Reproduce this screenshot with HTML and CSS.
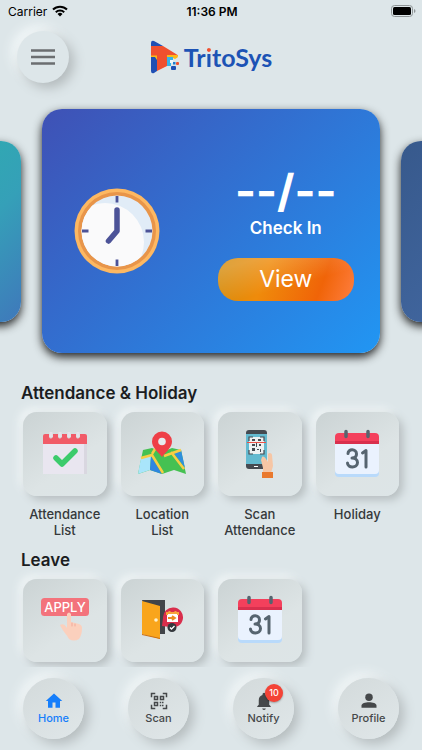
FILE: index.html
```html
<!DOCTYPE html>
<html lang="en">
<head>
    <meta charset="UTF-8">
    <meta name="viewport" content="width=device-width, initial-scale=1.0">
    <title>TritoSys</title>
    <link rel="stylesheet" href="styles.css">
</head>
<body>
    <!-- Shared icon used by both Holiday and Leave tiles -->
    <svg class="sprite" aria-hidden="true">
        <symbol id="calendar" viewBox="0 0 46 50">
            <path d="M1 38h44v6a4 4 0 0 1-4 4H5a4 4 0 0 1-4-4z" fill="#b9dafb"/>
            <path d="M1 12h44v29a4 4 0 0 1-4 4H5a4 4 0 0 1-4-4z" fill="#eaf2fe"/>
            <path d="M1 15V8a4 4 0 0 1 4-4h36a4 4 0 0 1 4 4v7z" fill="#f4405c"/>
            <path d="M1 12h44v3H1z" fill="#d9304e"/>
            <path d="M12 2.500v5M34 2.500v5" stroke="#56646f" stroke-width="3.500" stroke-linecap="round"/>
            <path d="M14 24.500c0-5 8.500-5 8.500.5 0 3-2 4-4.500 4 3 0 5.500 1.500 5.500 4.500 0 6-10 6-10 .5M28.500 24l3.500-2.500V38" fill="none" stroke="#56646f" stroke-width="3" stroke-linecap="round" stroke-linejoin="round"/>
        </symbol>
    </svg>

    <div class="status-bar">
        <div class="carrier">
            <span>Carrier</span>
            <svg width="16" height="12" viewBox="0 0 16 12" fill="none" stroke="#000" stroke-width="2">
                <path d="M1 4.500a10 10 0 0 1 14 0M3.800 7.300a6 6 0 0 1 8.400 0"/>
                <path d="M8 11.500L5.500 9a3.500 3.500 0 0 1 5 0z" fill="#000" stroke="none"/>
            </svg>
        </div>
        <time class="clock-time">11:36 PM</time>
        <svg class="battery" width="25" height="12" viewBox="0 0 25 12">
            <rect x=".5" y=".5" width="21" height="11" rx="3" fill="none" stroke="#8f9597"/>
            <rect x="2" y="2" width="18" height="8" rx="1.500"/>
            <path d="M23 4v4c2-.8 2-3.200 0-4z" fill="#8f9597"/>
        </svg>
    </div>

    <header class="header">
        <button class="menu-button" type="button" aria-label="Menu">
            <svg width="24" height="18" viewBox="0 0 24 18" stroke="#6b6e70" stroke-width="2.400">
                <path d="M0 2.500h24M0 9h24M0 15.500h24"/>
            </svg>
        </button>
        <div class="logo">
            <svg width="30" height="34" viewBox="0 0 30 34">
                <path d="M1 6V3Q1 0 4 1l9 5z" fill="#1f4fb4"/>
                <path d="M1 6h12l13 8q2 1 2 2H1z" fill="#f0502f"/>
                <path d="M1 16h6v15l-3 2q-3 1-3-2z" fill="#1f4fb4"/>
                <path d="M1 15.500h6V20l-2-3H1zM17 15h10.500q1 1 0 2.500L25 19l-2-1h-6z" fill="#fbb917"/>
                <path d="M7 16h10v10L7 31z" fill="#f0502f"/>
                <path d="M17 17h6v4h-2v5h-4z" fill="#35b4ea"/>
                <path d="M20 20h3v3h-3z" fill="#eef8fb"/>
                <rect x="21" y="26" width="5" height="4" rx="1" fill="#1f4fb4"/>
                <rect x="26" y="22" width="3" height="3" rx="1" fill="#f0502f"/>
                <path d="M23 22h2.500v2.500H23z" fill="#1f7fd0"/>
            </svg>
            <span class="logo-text">Tr<span class="logo-dot">i</span>toSys</span>
        </div>
    </header>

    <main>
        <section class="carousel">
            <div class="card card-side card-prev"></div>
            <div class="card card-main">
                <svg class="clock" viewBox="0 0 86 86">
                    <clipPath id="face"><circle cx="43" cy="43" r="35.500"/></clipPath>
                    <circle cx="43" cy="43" r="42.500" fill="#fdb862"/>
                    <circle cx="43" cy="43" r="39" fill="#e8954a"/>
                    <circle cx="43" cy="43" r="35.500" fill="#e1ecf7"/>
                    <circle cx="31" cy="54" r="39" fill="#fafafb" clip-path="url(#face)"/>
                    <path d="M43 8v6.500M43 71.500V78M8 43h6.500M71.500 43H78" stroke="#4c5398" stroke-width="2.800"/>
                    <path d="M43 22v21l-8.500 10" fill="none" stroke="#4c5398" stroke-width="5.500" stroke-linecap="round" stroke-linejoin="round"/>
                </svg>
                <div class="check-in">
                    <div class="check-time">--/--</div>
                    <div class="check-label">Check In</div>
                    <button class="view-button" type="button">View</button>
                </div>
            </div>
            <div class="card card-side card-next"></div>
        </section>

        <section class="group">
            <h2>Attendance &amp; Holiday</h2>
            <div class="tiles">
                <a class="tile" href="#">
                    <span class="tile-icon">
                        <svg width="46" height="46" viewBox="0 0 46 46">
                            <path d="M41 10h4v33h-6z" fill="#d9d7e0"/>
                            <path d="M1 10h41v33H1z" fill="#e9e6f0"/>
                            <path d="M1 13V5q0-2 2-2h4v3q1.500 3 4 0V3h5v3q1.500 3 4 0V3h5v3q1.500 3 4 0V3h5v3q1.500 3 4 0V3h5q2 0 2 2v8z" fill="#f15b68"/>
                            <path d="M7.500 1h3v5h-3zM16.500 1h3v5h-3zM25.500 1h3v5h-3zM34.500 1h3v5h-3z" fill="#e6e3ea"/>
                            <path d="M14 27l6 6 13-13" fill="none" stroke="#3ccb6c" stroke-width="5.500" stroke-linecap="round" stroke-linejoin="round"/>
                        </svg>
                    </span>
                    <span class="tile-label">Attendance List</span>
                </a>
                <a class="tile" href="#">
                    <span class="tile-icon">
                        <svg width="50" height="46" viewBox="0 0 50 46">
                            <path d="M6 19l9-2 10 4 10-4 9 2 5 24-12-4-12 4-12-4-12 4z" fill="#45c152"/>
                            <path d="M4 27l10-2-1 14-12 4z" fill="#a9e5fb"/>
                            <path d="M13 39l1-14 11 18z" fill="#2f86e0"/>
                            <path d="M36 21l8-2 4 18z" fill="#2f8fdd"/>
                            <path d="M4 27l11-3 11 18M15 23l3-5M27 25l17-6M34 21l13 17" fill="none" stroke="#f8cd45" stroke-width="2.500"/>
                            <path d="M25 26C20 20 15 16 15 10.500a10 10 0 0 1 20 0C35 16 30 20 25 26z" fill="#ee3f47"/>
                            <circle cx="25" cy="10.500" r="3.800" fill="#e6ebee"/>
                        </svg>
                    </span>
                    <span class="tile-label">Location List</span>
                </a>
                <a class="tile" href="#">
                    <span class="tile-icon">
                        <svg width="30" height="50" viewBox="0 0 30 50">
                            <rect x="1" y="1" width="21" height="39" rx="3" fill="#454a51"/>
                            <path d="M1 5h21v30H1z" fill="#64bad0"/>
                            <path d="M4 8h15v17H4z" fill="#eef1f2"/>
                            <path d="M4 12V8h4M15 8h4v4M4 21v4h4M15 25h4v-4" fill="none" stroke="#454a51" stroke-width="1.200"/>
                            <path d="M7 10h3v2H7zM13 10h3v2h-3zM7 15h3v2H7zM11 14h1v4h-1zM14 15h2v2h-2zM7 19h3v3H7zM12 20h2v1h-2zM15 20h1v3h-1z" fill="#454a51"/>
                            <path d="M2 13.500h19" stroke="#ee5147"/>
                            <path d="M9 37.500h4" stroke="#fff"/>
                            <path d="M17 28c1-1 3 0 4 2l2 3v-8c1-2 4-1 4 1l1 11-2 7h-8v-5l-2-8z" fill="#f6c6a5"/>
                            <path d="M17 43h11v6H17z" fill="#e9792e"/>
                        </svg>
                    </span>
                    <span class="tile-label">Scan Attendance</span>
                </a>
                <a class="tile" href="#">
                    <span class="tile-icon"><svg width="46" height="50"><use href="#calendar"/></svg></span>
                    <span class="tile-label">Holiday</span>
                </a>
            </div>
        </section>

        <section class="group">
            <h2>Leave</h2>
            <div class="tiles">
                <a class="tile" href="#" aria-label="Apply leave">
                    <span class="tile-icon">
                        <svg width="50" height="46" viewBox="0 0 50 46">
                            <rect x="1" y="1" width="48" height="18" rx="3.500" fill="#f3737c"/>
                            <text class="apply-text" x="25" y="14.500" text-anchor="middle">APPLY</text>
                            <path d="M27 27V17q2-3 4 0v8l8 2q3 1 3 4c0 5-1 8-3 11q-5 3-10 0c-2-4-7-9-9-14 3-2 5 0 7 3z" fill="#fbd0bd"/>
                            <path d="M32 26v3M35 27v2" stroke="#f2a899" stroke-linecap="round"/>
                        </svg>
                    </span>
                </a>
                <a class="tile" href="#" aria-label="Leave list">
                    <span class="tile-icon">
                        <svg width="42" height="42" viewBox="0 0 42 42">
                            <path d="M1 1h23v34H14z" fill="#414449"/>
                            <path d="M1 2l18 5v33L1 35z" fill="#f9a51c"/>
                            <path d="M1 35l18 4v1L1 36z" fill="#c96e13"/>
                            <circle cx="15" cy="21" r="1.800" fill="#fff2cc"/>
                            <path d="M21 27l1-8a10 10 0 1 1 7 9z" fill="#d92e4c"/>
                            <path d="M26 14h11v9H26z" fill="#fff"/>
                            <path d="M26 16v-2h11v2M28.500 12v2M34.500 12v2" fill="none" stroke="#f7a43b" stroke-width="2"/>
                            <path d="M27 19h6M31 17l3 2-3 2" fill="none" stroke="#ed8c23" stroke-width="1.800"/>
                            <circle cx="31" cy="28.500" r="4.500" fill="#34383d"/>
                            <path d="M29 28.500l1.500 1.500 3-3" fill="none" stroke="#fff" stroke-width="1.300"/>
                        </svg>
                    </span>
                </a>
                <a class="tile" href="#" aria-label="Leave calendar">
                    <span class="tile-icon"><svg width="46" height="50"><use href="#calendar"/></svg></span>
                </a>
            </div>
        </section>
    </main>

    <nav class="bottom-nav">
        <a class="nav-item active" href="#">
            <svg width="18" height="18" viewBox="0 0 24 24" fill="currentColor"><path d="M10 21v-7h4v7h6v-9h3L12 2 1 12h3v9z"/></svg>
            Home
        </a>
        <a class="nav-item" href="#">
            <svg width="18" height="18" viewBox="0 0 24 24" fill="none" stroke="currentColor" stroke-width="2">
                <path d="M2 7V2h5M17 2h5v5M2 17v5h5M17 22h5v-5M6 6h4v4H6zM14 6h4v4h-4zM6 14h4v4H6z"/>
                <path d="M13 14h6M13 18h6" stroke-dasharray="2 1"/>
            </svg>
            Scan
        </a>
        <a class="nav-item" href="#">
            <svg width="18" height="18" viewBox="0 0 24 24" fill="currentColor"><path d="M12 24a2.500 2.500 0 0 0 2.500-2h-5A2.500 2.500 0 0 0 12 24zM19 17v-6c0-4-2-6-5-7V3a2 2 0 0 0-4 0v1c-3 1-5 3-5 7v6l-2 2v1h18v-1z"/></svg>
            Notify
            <span class="badge">10</span>
        </a>
        <a class="nav-item" href="#">
            <svg width="18" height="18" viewBox="0 0 24 24" fill="currentColor"><circle cx="12" cy="7" r="5"/><path d="M2 21v-3c0-6 20-6 20 0v3z"/></svg>
            Profile
        </a>
    </nav>
</body>
</html>
```

FILE: styles.css
```css
* {
    box-sizing: border-box;
}

body {
    margin: 0;
    min-height: 100vh;
    display: flex;
    flex-direction: column;
    overflow-x: hidden;
    background-color: #dde6e9;
    color: #1b1d1f;
    font-family: Inter, 'Liberation Sans', sans-serif;
}

a {
    color: inherit;
    text-decoration: none;
}

button {
    border: none;
    padding: 0;
    font-family: inherit;
    cursor: pointer;
}

.sprite {
    display: none;
}

.status-bar {
    display: grid;
    grid-template-columns: 1fr auto 1fr;
    align-items: center;
    height: 22px;
    padding: 0 6px 0 8px;
    font-size: 12px;
    color: #000;
}

.carrier {
    display: flex;
    align-items: center;
    gap: 5px;
}

.clock-time {
    font-weight: 600;
}

.battery {
    justify-self: end;
}

.header {
    display: grid;
    grid-template-columns: 1fr auto 1fr;
    align-items: center;
    padding: 9px 17px 0;
}

.menu-button {
    display: flex;
    align-items: center;
    justify-content: center;
    width: 52px;
    height: 52px;
    border-radius: 50%;
    background: #dde6e9;
    box-shadow: 5px 5px 12px #b3babc, -5px -5px 12px #f4f9fa;
}

.logo {
    display: flex;
    align-items: center;
    gap: 4px;
}

.logo-text {
    color: #1c53b5;
    font-family: Lato, sans-serif;
    font-size: 25px;
    font-weight: 700;
    line-height: 28px;
}

/* Orange dot over the blue stem */
.logo-dot {
    background: linear-gradient(#f0502f 36%, #1c53b5 36%);
    background-clip: text;
    -webkit-background-clip: text;
    color: transparent;
}

.carousel {
    display: flex;
    align-items: center;
    justify-content: center;
    gap: 21px;
    padding: 26px 0 30px;
    overflow: hidden;
}

.card {
    flex-shrink: 0;
    border-radius: 20px;
    box-shadow: 0 4px 10px rgba(0, 0, 0, 0.85);
}

.card-side {
    width: 64%;
    height: 181px;
}

.card-prev {
    background: linear-gradient(135deg, #22c1a0, #35a0b8 70%, #3f78bb);
}

.card-next {
    background: linear-gradient(135deg, #37598c, #4a72b0);
}

.card-main {
    display: flex;
    align-items: center;
    justify-content: space-between;
    width: 80%;
    height: 244px;
    padding: 0 26px 0 32px;
    background: linear-gradient(135deg, #3f51b5, #2196f3);
}

.clock {
    width: 86px;
}

.check-in {
    width: 136px;
    padding-top: 6px;
    color: #fff;
    text-align: center;
}

.check-time {
    margin-bottom: 4px;
    font-size: 45px;
    font-weight: 700;
    line-height: 46px;
}

.check-label {
    font-size: 17px;
    font-weight: 600;
    line-height: 20px;
}

.view-button {
    width: 100%;
    height: 43px;
    margin-top: 20px;
    border-radius: 20px;
    background: linear-gradient(165deg, rgba(255, 255, 255, 0.2) 15%, rgba(255, 255, 255, 0) 60%), linear-gradient(110deg, #d18b0b, #ef8b0b 35%, #f06408 75%, #ff7e40);
    color: #fff;
    font-size: 23px;
}

.group {
    padding: 0 23px;
}

.group + .group {
    margin-top: 12px;
}

h2 {
    margin: 0 -2px 9px;
    font-size: 17px;
    font-weight: 600;
    line-height: 20px;
}

.tiles {
    display: grid;
    grid-template-columns: repeat(4, 1fr);
    gap: 14px;
}

.tile {
    display: flex;
    flex-direction: column;
    align-items: center;
    gap: 10px;
}

.tile-icon {
    display: flex;
    align-items: center;
    justify-content: center;
    width: 100%;
    aspect-ratio: 1;
    border-radius: 14px;
    background: linear-gradient(145deg, #cbd3d4, #dde4e5 60%, #dde5e7);
    box-shadow: 4px 4px 8px #b7bec0, -4px -4px 8px #f0f5f6;
}

.tile-label {
    padding: 0 4px;
    color: #35393b;
    font-size: 13px;
    font-weight: 500;
    line-height: 16px;
    text-align: center;
}

.apply-text {
    fill: #fff;
    font-size: 13px;
    font-weight: 500;
}

.bottom-nav {
    position: relative;
    display: flex;
    justify-content: space-between;
    margin-top: auto;
    padding: 11px 23px;
    background-color: #dde6e9;
}

.nav-item {
    position: relative;
    display: flex;
    flex-direction: column;
    align-items: center;
    justify-content: center;
    gap: 1px;
    width: 61px;
    height: 61px;
    border-radius: 50%;
    background: linear-gradient(145deg, #d3dadb, #e0e7e9);
    box-shadow: 5px 5px 12px #b5bcbe, -5px -5px 12px #f2f7f8;
    color: #45484a;
    font-size: 11px;
    font-weight: 500;
    line-height: 14px;
}

.nav-item.active {
    color: #157efb;
}

.badge {
    position: absolute;
    top: 6px;
    right: 11px;
    width: 18px;
    height: 18px;
    border-radius: 50%;
    background: #f44336;
    box-shadow: 0 1px 2px rgba(0, 0, 0, 0.3);
    color: #fff;
    font-size: 9px;
    line-height: 18px;
    text-align: center;
}
```
